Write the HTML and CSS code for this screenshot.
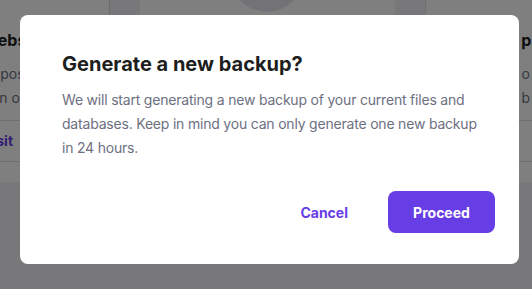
FILE: index.html
```html
<!DOCTYPE html>
<html lang="en">
<head>
<meta charset="utf-8">
<title>Generate a new backup</title>
<link rel="stylesheet" href="styles.css">
</head>
<body>
<div class="page">
  <div class="cards">
    <div class="card card-left">
      <h3 class="card-title">Websites</h3>
      <p class="card-text">Deposit files<br>Run once</p>
      <div class="card-link">Visit</div>
    </div>
    <div class="gap"></div>
    <div class="card card-center">
      <div class="blob"></div>
    </div>
    <div class="gap"></div>
    <div class="card card-right">
      <h3 class="card-title">Backups pa</h3>
      <p class="card-text">Restore o<br>Select a b</p>
      <div class="card-link">Select</div>
    </div>
  </div>
</div>
<div class="overlay">
  <div class="modal" role="dialog" aria-labelledby="mtitle">
    <h2 class="modal-title" id="mtitle">Generate a new backup?</h2>
    <p class="modal-text">We will start generating a new backup of your current files and<br>databases. Keep in mind you can only generate one new backup<br>in 24 hours.</p>
    <div class="actions">
      <button class="btn btn-text">Cancel</button>
      <button class="btn btn-primary">Proceed</button>
    </div>
  </div>
</div>
</body>
</html>
```

FILE: styles.css
```css
* { box-sizing: border-box; }
html, body {
  margin: 0;
  padding: 0;
  width: 532px;
  height: 289px;
  overflow: hidden;
}
body {
  font-family: Inter, "DejaVu Sans", sans-serif;
  background: #f0eff5;
  position: relative;
}
.page {
  height: 289px;
  overflow: hidden;
}
.cards {
  display: flex;
  margin-left: -42px;
  align-items: flex-start;
}
.card {
  background: #ffffff;
  height: 182px;
  flex: none;
  overflow: hidden;
}
.gap {
  width: 30px;
  flex: none;
}
.card-left {
  width: 152px;
  padding: 30px 0 0 24px;
  border-right: 1px solid #d8d8dc;
}
.card-center {
  width: 255px;
  position: relative;
}
.blob {
  position: absolute;
  left: 91px;
  top: -60px;
  width: 72px;
  height: 72px;
  border-radius: 50%;
  background: #e6e5ec;
}
.card-right {
  width: 200px;
  padding: 30px 0 0 24px;
  border-left: 1px solid #e0e0e4;
}
.card-title {
  margin: 0;
  font-size: 16px;
  font-weight: 700;
  color: #1d1e20;
  line-height: 20px;
  white-space: nowrap;
}
.card-right .card-title {
  text-align: right;
  padding-right: 86px;
}
.card-right .card-text {
  text-align: right;
  padding-right: 95px;
}
.card-text {
  margin: 12px 0 0;
  font-size: 14px;
  line-height: 24px;
  color: #6d7081;
  white-space: nowrap;
  padding-bottom: 10px;
  border-bottom: 1px solid #dadce0;
}
.card-link {
  font-size: 14px;
  font-weight: 700;
  color: #673de6;
  line-height: 40px;
  border-bottom: 1px solid #dadce0;
}
.overlay {
  position: absolute;
  inset: 0;
  background: rgba(0, 0, 0, 0.5);
}
.modal {
  margin: 15px 0 0 20px;
  width: 499px;
  background: #ffffff;
  border-radius: 8px;
  padding: 37px 24px 31px 42px;
  display: flex;
  flex-direction: column;
}
.modal-title {
  margin: 0;
  font-size: 20px;
  line-height: 24px;
  font-weight: 700;
  color: #1d1e20;
}
.modal-text {
  margin: 12px 0 0;
  font-size: 14px;
  line-height: 24px;
  letter-spacing: -0.2px;
  color: #6d7081;
  white-space: nowrap;
}
.actions {
  margin-top: 31px;
  display: flex;
  justify-content: flex-end;
  gap: 16px;
}
.btn {
  height: 42px;
  padding: 0 24px;
  border: 0;
  border-radius: 8px;
  font-family: inherit;
  font-size: 14px;
  font-weight: 700;
  cursor: pointer;
}
.btn-text {
  background: transparent;
  color: #673de6;
}
.btn-primary {
  background: #673de6;
  color: #ffffff;
  width: 107px;
}
```
